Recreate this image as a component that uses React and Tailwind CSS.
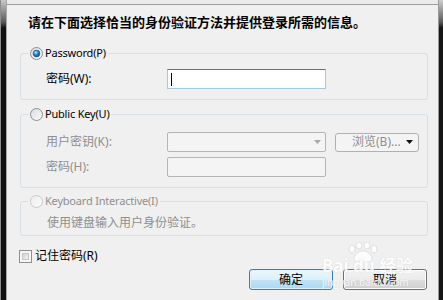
import React from 'react';

const font = { fontFamily: "'Noto Sans', 'Noto Sans CJK SC', sans-serif" };

// Win7 style radio drawn as svg
const Radio = ({ id, checked, disabled }) => (
    <svg width="13" height="13" viewBox="0 0 13 13" className="shrink-0">
        <defs>
            <linearGradient id={`rg-${id}`} x1="0" y1="0" x2="1" y2="1">
                <stop offset="0" stopColor={disabled ? '#ececec' : '#dcdcdc'} />
                <stop offset="1" stopColor="#fbfbfb" />
            </linearGradient>
            <radialGradient id={`rb-${id}`} cx="0.4" cy="0.35" r="0.65">
                <stop offset="0" stopColor="#c4f0ff" />
                <stop offset="0.45" stopColor="#2d93d6" />
                <stop offset="1" stopColor="#0d4a82" />
            </radialGradient>
        </defs>
        <circle cx="6.5" cy="6.5" r="6" fill={`url(#rg-${id})`} stroke={disabled ? '#c9c9c9' : '#8e8f8f'} />
        {checked && <circle cx="6.5" cy="6.5" r="3.4" fill={`url(#rb-${id})`} stroke="#1b5689" strokeWidth="0.6" />}
    </svg>
);

const App = () => {
    return (
        <div className="w-[443px] h-[300px] flex bg-[#f0f0f0] overflow-hidden relative" style={font}>
            {/* left frame */}
            <div className="w-[7px] h-full bg-[linear-gradient(to_bottom,#c9c9c9_0px,#5a5a5a_22px,#111_28px,#111_100%)] border-l border-[#8c8c8c] border-r border-r-[#a8a8a8]" />

            <div className="flex-1 flex flex-col">
                <div className="h-[5px] bg-[#ebebeb] border-b border-[#9e9e9e]" />

                <div className="pl-[13px] pr-[10px]">
                    <h1 className="mt-[9px] ml-[8px] text-[13px] leading-[16px] font-bold text-black">
                        请在下面选择恰当的身份验证方法并提供登录所需的信息。
                    </h1>

                    {/* Password */}
                    <fieldset className="mt-[16px] border border-[#d5dfe5] rounded-[3px] pb-[10px]">
                        <legend className="ml-[7px] px-[2px]">
                            <span className="flex items-center gap-[2px] h-[14px] text-[11px] tracking-[-0.2px] text-black">
                                <Radio id="p" checked />
                                <span>Password(P)</span>
                            </span>
                        </legend>
                        <div className="mt-[9px] flex items-center pl-[25px]">
                            <span className="w-[121px] text-[12px] text-black">密码(W):</span>
                            <div className="w-[159px] h-[20px] bg-white border border-[#a4c9e3] border-t-[#3d7bad] flex items-center pl-[3px]">
                                <div className="w-px h-[13px] bg-black" />
                            </div>
                        </div>
                    </fieldset>

                    {/* Public key */}
                    <fieldset className="mt-[7px] border border-[#d5dfe5] rounded-[3px] pb-[10px]">
                        <legend className="ml-[7px] px-[2px]">
                            <span className="flex items-center gap-[2px] h-[14px] text-[11px] tracking-[-0.2px] text-black">
                                <Radio id="u" />
                                <span>Public Key(U)</span>
                            </span>
                        </legend>
                        <div className="mt-[11px] flex items-center pl-[25px]">
                            <span className="w-[121px] text-[12px] text-[#8f8f8f]">用户密钥(K):</span>
                            <div className="w-[159px] h-[20px] bg-[#f4f4f4] border border-[#b5b5b5] rounded-[2px] flex items-center justify-end pr-[4px]">
                                <svg width="7" height="4" viewBox="0 0 7 4"><path d="M0 0h7L3.5 4z" fill="#a8a8a8" /></svg>
                            </div>
                            <div className="ml-[9px] w-[84px] h-[19px] bg-[#f4f4f4] border border-[#adb2b5] rounded-[3px] flex items-center pl-[16px] pr-[5px] text-[12px] text-[#8f8f8f]">
                                <span className="flex-1">浏览(B)...</span>
                                <svg width="7" height="4" viewBox="0 0 7 4"><path d="M0 0h7L3.5 4z" fill="#111" /></svg>
                            </div>
                        </div>
                        <div className="mt-[5px] flex items-center pl-[25px]">
                            <span className="w-[121px] text-[12px] text-[#8f8f8f]">密码(H):</span>
                            <div className="w-[159px] h-[20px] bg-[#f4f4f4] border border-[#b5b5b5] rounded-[2px]" />
                        </div>
                    </fieldset>

                    {/* Keyboard interactive */}
                    <fieldset className="mt-[6px] border border-[#d5dfe5] rounded-[3px] pb-[4px]">
                        <legend className="ml-[7px] px-[2px]">
                            <span className="flex items-center gap-[2px] h-[14px] text-[11px] tracking-[-0.2px] text-[#8f8f8f]">
                                <Radio id="i" disabled />
                                <span>Keyboard Interactive(I)</span>
                            </span>
                        </legend>
                        <div className="mt-[7px] pl-[26px] text-[12px] leading-[16px] text-[#8f8f8f]">
                            使用键盘输入用户身份验证。
                        </div>
                    </fieldset>

                    <div className="mt-[13px] -ml-px flex items-center gap-[3px] h-[14px]">
                        <div className="w-[13px] h-[13px] border border-[#8e8f8f] bg-[#f6f6f6] p-[2px]">
                            <div className="w-full h-full bg-[linear-gradient(135deg,#d2d2d2,#f3f3f3)] border border-[#c8c8c8]" />
                        </div>
                        <span className="text-[12px] text-black">记住密码(R)</span>
                    </div>

                    <div className="mt-[6px] flex justify-end gap-[10px] pr-px">
                        <button className="w-[84px] h-[21px] rounded-[3px] border border-[#3c7fb1] bg-[linear-gradient(to_bottom,#ecf7fd_0%,#dcf0fb_50%,#c0e3f6_51%,#a9d9f3_100%)] shadow-[inset_0_0_0_1px_#d8f2ff] text-[12px] text-black">
                            确定
                        </button>
                        <button className="w-[84px] h-[21px] rounded-[3px] border border-[#707070] bg-[linear-gradient(to_bottom,#f2f2f2_0%,#ebebeb_50%,#dddddd_51%,#cfcfcf_100%)] shadow-[inset_0_0_0_1px_#fcfcfc] text-[12px] text-black">
                            取消
                        </button>
                    </div>
                </div>
            </div>

            {/* right frame */}
            <div className="w-[5px] h-full bg-[linear-gradient(to_bottom,#cfcfcf_0px,#5a5a5a_22px,#151515_28px,#151515_100%)] border-l border-[#9a9a9a]" />

            {/* baidu watermark */}
            <div className="absolute left-[322px] top-[242px] flex flex-col items-start pointer-events-none opacity-80">
                <svg width="40" height="20" viewBox="0 0 40 20" className="ml-[22px]">
                    <g fill="#ffffff" stroke="#d6d6d6" strokeWidth="0.8">
                        <ellipse cx="8" cy="7" rx="3" ry="4" />
                        <ellipse cx="15" cy="3.5" rx="3" ry="3.5" />
                        <ellipse cx="23" cy="3.5" rx="3" ry="3.5" />
                        <ellipse cx="30" cy="7" rx="3" ry="4" />
                        <path d="M19 9c5 0 9 4 9 8c0 3-4 3-9 3s-9 0-9-3c0-4 4-8 9-8z" />
                    </g>
                </svg>
                <span className="-mt-[5px] text-[17px] leading-[18px] font-bold text-white [text-shadow:0_0_1px_#c8c8c8]">Bai du 经验</span>
                <span className="mt-[1px] text-[10px] leading-[12px] text-white [text-shadow:0_0_1px_#c8c8c8]">jingyan.baidu.com</span>
            </div>
        </div>
    );
};

export default App;
